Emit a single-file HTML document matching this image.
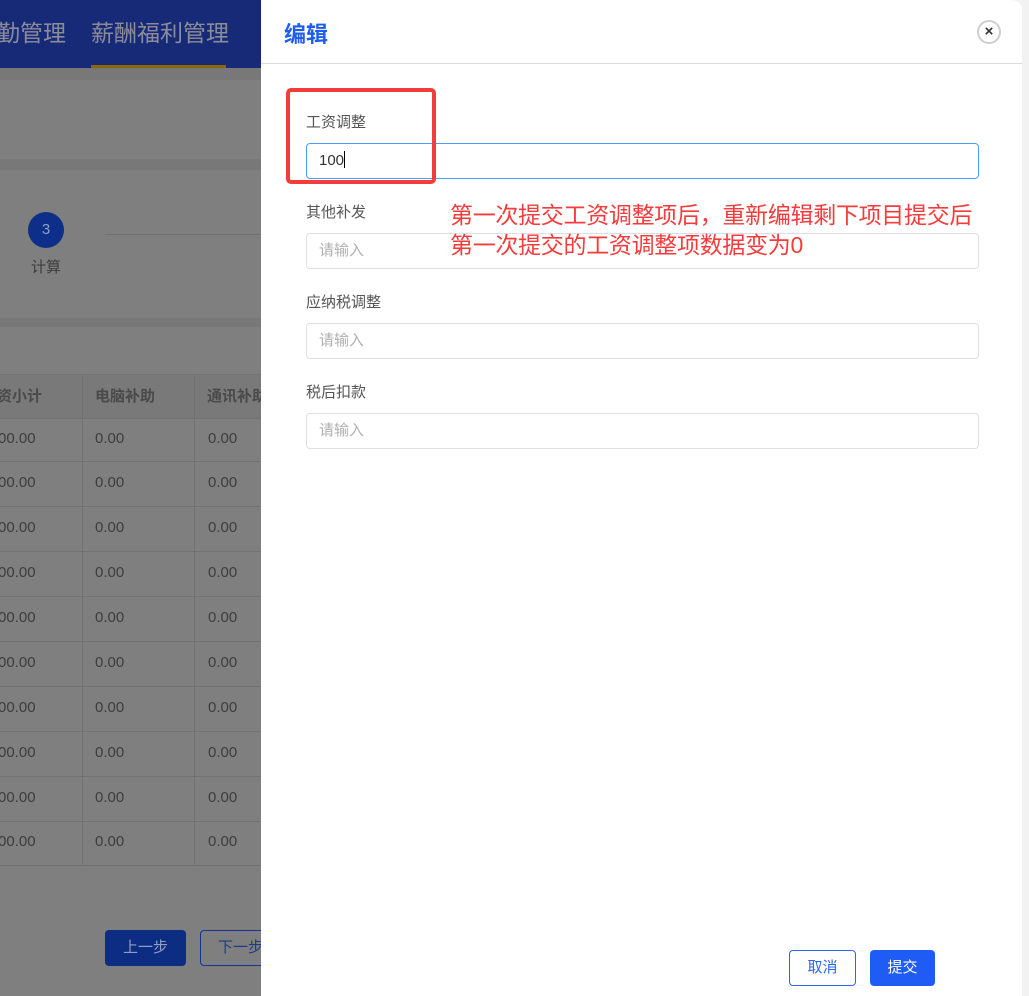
<!DOCTYPE html>
<html><head><meta charset="utf-8"><style>
*{margin:0;padding:0;box-sizing:border-box}
body{width:1029px;height:996px;position:relative;overflow:hidden;background:#f2f2f2;font-family:"Liberation Sans","Noto Sans CJK SC",sans-serif}
.bg{position:absolute;left:0;top:0;width:262px;height:996px;background:#7f7f7f;overflow:hidden}
.nav{position:absolute;left:0;top:0;width:262px;height:68px;background:#172a78}
.nav span{position:absolute;top:14px;font-size:23px;color:#8c8c99;white-space:nowrap}
.ul{position:absolute;left:91px;top:65px;width:135px;height:4px;background:#8a6a00}
.strip{position:absolute;left:0;width:262px;background:#787878}
.s3{position:absolute;left:28px;top:212px;width:36px;height:36px;border-radius:50%;background:#0d2f8a;color:#8fa0c8;text-align:center;line-height:36px;font-size:15px}
.th{position:absolute;left:0;top:374px;width:262px;height:44px;background:#797979;border-top:1px solid #747474}
.cell{position:absolute;font-size:15px;color:#3d3d3d;white-space:nowrap}
.hd{font-weight:bold;color:#4a4a4a}
.row{position:absolute;left:0;width:262px;height:1px;background:#727272}
.vl{position:absolute;width:1px;background:#727272;top:375px;height:491px}
.drawer{position:absolute;left:261px;top:0;width:761px;height:996px;background:#fff;border-top-right-radius:10px}
.title{position:absolute;left:23px;top:17px;font-size:22px;font-weight:bold;color:#1f5cf0}
.hr{position:absolute;left:0;top:63px;width:761px;height:1px;background:#dcdcdc}
.close{position:absolute;left:716px;top:20px;width:24px;height:24px;border:2px solid #cfcfcf;border-radius:50%;text-align:center;line-height:19px;font-size:15px;font-weight:bold;color:#333}
.lbl{position:absolute;left:45px;font-size:15px;color:#555}
.inp{position:absolute;left:45px;width:673px;height:36px;border:1px solid #dcdfe6;border-radius:4px;font-size:15px;color:#b0b0b0;padding-left:12px;line-height:34px}
.red{position:absolute;left:25px;top:88px;width:150px;height:96px;border:4px solid #f33c3c;border-radius:5px}
.note{position:absolute;left:189px;font-size:23px;color:#f53b3b;white-space:nowrap;letter-spacing:-0.3px}
.btn{position:absolute;top:950px;height:36px;border-radius:4px;font-size:15px;text-align:center;line-height:34px}
</style></head><body>
<div class="bg">
<div class="nav"><span style="left:-3px">勤管理</span><span style="left:91px">薪酬福利管理</span></div>
<div class="ul"></div>
<div class="strip" style="top:68px;height:12px"></div>
<div class="strip" style="top:159px;height:11px"></div>
<div class="strip" style="top:318px;height:9px"></div>
<div class="s3">3</div>
<div class="cell" style="left:31px;top:256px">计算</div>
<div style="position:absolute;left:105px;top:234px;width:160px;height:1px;background:#707070"></div>
<div class="th"></div>
<div class="cell hd" style="left:-3px;top:385px">资小计</div>
<div class="cell hd" style="left:95px;top:385px">电脑补助</div>
<div class="cell hd" style="left:207px;top:385px">通讯补助</div>
<div class="vl" style="left:82px"></div>
<div class="vl" style="left:194px"></div>
<div class="row" style="top:418px"></div>
<div class="row" style="top:461px"></div><div class="row" style="top:506px"></div><div class="row" style="top:551px"></div><div class="row" style="top:596px"></div><div class="row" style="top:641px"></div><div class="row" style="top:686px"></div><div class="row" style="top:731px"></div><div class="row" style="top:776px"></div><div class="row" style="top:821px"></div><div class="row" style="top:865px"></div>
<div class="cell" style="left:-2px;top:430px">00.00</div><div class="cell" style="left:95px;top:430px">0.00</div><div class="cell" style="left:208px;top:430px">0.00</div>
<div class="cell" style="left:-2px;top:474px">00.00</div><div class="cell" style="left:95px;top:474px">0.00</div><div class="cell" style="left:208px;top:474px">0.00</div>
<div class="cell" style="left:-2px;top:519px">00.00</div><div class="cell" style="left:95px;top:519px">0.00</div><div class="cell" style="left:208px;top:519px">0.00</div>
<div class="cell" style="left:-2px;top:564px">00.00</div><div class="cell" style="left:95px;top:564px">0.00</div><div class="cell" style="left:208px;top:564px">0.00</div>
<div class="cell" style="left:-2px;top:609px">00.00</div><div class="cell" style="left:95px;top:609px">0.00</div><div class="cell" style="left:208px;top:609px">0.00</div>
<div class="cell" style="left:-2px;top:654px">00.00</div><div class="cell" style="left:95px;top:654px">0.00</div><div class="cell" style="left:208px;top:654px">0.00</div>
<div class="cell" style="left:-2px;top:699px">00.00</div><div class="cell" style="left:95px;top:699px">0.00</div><div class="cell" style="left:208px;top:699px">0.00</div>
<div class="cell" style="left:-2px;top:744px">00.00</div><div class="cell" style="left:95px;top:744px">0.00</div><div class="cell" style="left:208px;top:744px">0.00</div>
<div class="cell" style="left:-2px;top:789px">00.00</div><div class="cell" style="left:95px;top:789px">0.00</div><div class="cell" style="left:208px;top:789px">0.00</div>
<div class="cell" style="left:-2px;top:833px">00.00</div><div class="cell" style="left:95px;top:833px">0.00</div><div class="cell" style="left:208px;top:833px">0.00</div>
<div style="position:absolute;left:105px;top:930px;width:81px;height:36px;background:#0d2d82;border-radius:4px;color:#8fa0c8;text-align:center;line-height:36px;font-size:15px">上一步</div>
<div style="position:absolute;left:200px;top:930px;width:80px;height:36px;border:1px solid #13339a;border-radius:4px;color:#1d3a8a;line-height:34px;font-size:15px;padding-left:17px;white-space:nowrap">下一步</div>
</div>
<div class="drawer">
<div class="title">编辑</div>
<div class="close">×</div>
<div class="hr"></div>
<div class="lbl" style="top:111px">工资调整</div>
<div class="inp" style="top:143px;border-color:#4a9cf5;color:#333">100<span style="display:inline-block;width:1px;height:17px;background:#000;vertical-align:-3px"></span></div>
<div class="red"></div>
<div class="lbl" style="top:201px">其他补发</div>
<div class="inp" style="top:233px">请输入</div>
<div class="lbl" style="top:291px">应纳税调整</div>
<div class="inp" style="top:323px">请输入</div>
<div class="lbl" style="top:381px">税后扣款</div>
<div class="inp" style="top:413px">请输入</div>
<div class="note" style="top:196px">第一次提交工资调整项后，重新编辑剩下项目提交后</div>
<div class="note" style="top:226px">第一次提交的工资调整项数据变为0</div>
<div class="btn" style="left:528px;width:67px;border:1px solid #2b66f0;color:#2b66f0">取消</div>
<div class="btn" style="left:609px;width:65px;background:#1f5cf6;color:#fff;line-height:36px">提交</div>
</div>
</body></html>
